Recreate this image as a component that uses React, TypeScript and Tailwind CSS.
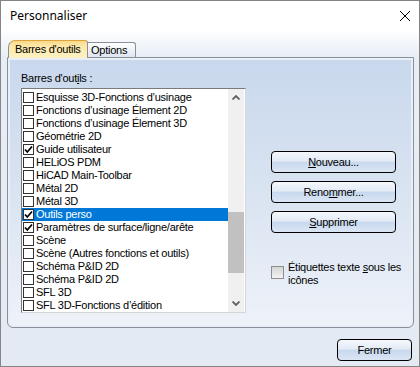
import React from 'react';

const items = [
    { label: 'Esquisse 3D-Fonctions d’usinage', checked: false },
    { label: 'Fonctions d’usinage Élement 2D', checked: false },
    { label: 'Fonctions d’usinage Élement 3D', checked: false },
    { label: 'Géométrie 2D', checked: false },
    { label: 'Guide utilisateur', checked: true },
    { label: 'HELiOS PDM', checked: false },
    { label: 'HiCAD Main-Toolbar', checked: false },
    { label: 'Métal 2D', checked: false },
    { label: 'Métal 3D', checked: false },
    { label: 'Outils perso', checked: true, selected: true },
    { label: 'Paramètres de surface/ligne/arête', checked: true },
    { label: 'Scène', checked: false },
    { label: 'Scène (Autres fonctions et outils)', checked: false },
    { label: 'Schéma P&ID 2D', checked: false },
    { label: 'Schéma P&ID 2D', checked: false },
    { label: 'SFL 3D', checked: false },
    { label: 'SFL 3D-Fonctions d’édition', checked: false },
];

function Row({ label, checked, selected }: { label: string; checked: boolean; selected?: boolean }) {
    return (
        <div className={`flex items-center h-[13px] shrink-0 ${selected ? 'bg-[#0078d7] text-white' : 'text-black'}`}>
            <span className="ml-[1px] mr-[2px] w-[11px] h-[11px] border border-[#333333] bg-white flex items-center justify-center">
                {checked && (
                    <svg width="9" height="9" viewBox="0 0 9 9">
                        <path d="M1 4.5 L3.3 7 L8 1.5" fill="none" stroke="#000" strokeWidth="1.8" />
                    </svg>
                )}
            </span>
            <span className="whitespace-nowrap leading-[13px]">{label}</span>
        </div>
    );
}

function WinButton({ children, className = '' }: { children: React.ReactNode; className?: string }) {
    return (
        <button
            className={`h-[22px] rounded-[4px] border border-black bg-[linear-gradient(to_bottom,#f5f8fc_0%,#e3ebf6_45%,#c8d8ee_52%,#dbe6f4_100%)] text-[11px] tracking-[-0.25px] text-black flex items-center justify-center ${className}`}
        >
            {children}
        </button>
    );
}

export default function App() {
    return (
        <div className="w-[420px] h-[367px] border border-[#858585] flex flex-col font-['Liberation_Sans',Arial,sans-serif] text-[11px] tracking-[-0.25px] select-none overflow-hidden">
            {/* Title bar */}
            <div className="h-[29px] bg-white flex items-center justify-between pl-[9px] pr-[9px] shrink-0">
                <span className="font-['Noto_Sans',sans-serif] text-[12px] tracking-normal text-black">Personnaliser</span>
                <svg width="10" height="10" viewBox="0 0 10 10">
                    <path d="M0 0 L10 10 M10 0 L0 10" stroke="#000" strokeWidth="1" />
                </svg>
            </div>

            {/* Body */}
            <div className="flex-1 flex flex-col bg-[linear-gradient(to_bottom,#ffffff_0px,#e8eef7_26px,#e3eaf4_100%)]">
                {/* Tabs */}
                <div className="flex items-end h-[17px] mt-[10px] pl-[7px] relative z-10">
                    <div className="w-[80px] h-[18px] -mb-[1px] rounded-tl-[7px] rounded-tr-[3px] border border-b-0 border-[#8a8f99] border-t-[#e0a23a] bg-[linear-gradient(to_bottom,#fbd98a_0%,#fde8a8_30%,#fff1c4_100%)] flex items-center pl-[6px] text-black">
                        Barres d'outils
                    </div>
                    <div className="w-[48px] h-[15px] rounded-tr-[3px] border border-l-0 border-b-0 border-[#8a8f99] bg-[linear-gradient(to_bottom,#ffffff,#dde5f0)] flex items-center pl-[3px] text-black">
                        Options
                    </div>
                </div>

                {/* Panel */}
                <div className="ml-[6px] w-[407px] h-[271px] border border-[#8a8f99] rounded-b-[6px] bg-[#e9eff7] p-[2px] shrink-0">
                    <div className="w-full h-full rounded-b-[4px] bg-[linear-gradient(to_bottom,#c9d8ed_0%,#dbe5f2_55%,#eef2f9_100%)] flex pl-[11px] pt-[12px]">
                        {/* List column */}
                        <div className="flex flex-col w-[225px]">
                            <div className="h-[13px] leading-[13px] text-black">
                                Barres d'out<span className="underline">i</span>ls :
                            </div>
                            <div className="mt-[3px] h-[225px] border border-[#7a7a7a] border-r-[#d6d6d6] border-b-[#d6d6d6] bg-white flex overflow-hidden">
                                <div className="flex-1 flex flex-col pt-[2px] overflow-hidden">
                                    {items.map((it, i) => (
                                        <Row key={i} label={it.label} checked={it.checked} selected={it.selected} />
                                    ))}
                                </div>
                                <div className="w-[16px] mr-[1px] bg-[#f0f0f0] flex flex-col">
                                    <div className="h-[17px] flex items-center justify-center">
                                        <svg width="8" height="5" viewBox="0 0 8 5">
                                            <path d="M0.5 4.5 L4 1 L7.5 4.5" fill="none" stroke="#606060" strokeWidth="1.8" />
                                        </svg>
                                    </div>
                                    <div className="h-[106px]" />
                                    <div className="h-[61px] bg-[#c1c1c1]" />
                                    <div className="flex-1" />
                                    <div className="h-[17px] flex items-center justify-center">
                                        <svg width="8" height="5" viewBox="0 0 8 5">
                                            <path d="M0.5 0.5 L4 4 L7.5 0.5" fill="none" stroke="#606060" strokeWidth="1.8" />
                                        </svg>
                                    </div>
                                </div>
                            </div>
                        </div>

                        {/* Actions */}
                        <div className="ml-[25px] mt-[79px] flex flex-col">
                            <WinButton className="w-[125px]">
                                <span className="underline">N</span>ouveau...
                            </WinButton>
                            <WinButton className="w-[125px] mt-[8px]">
                                Reno<span className="underline">m</span>mer...
                            </WinButton>
                            <WinButton className="w-[125px] mt-[8px]">
                                <span className="underline">S</span>upprimer
                            </WinButton>
                            <div className="flex items-start mt-[28px]">
                                <span className="mt-[5px] w-[13px] h-[13px] border border-[#8f8f8f] bg-[linear-gradient(to_bottom,#d5d5d5,#f3f3f3)] shrink-0" />
                                <span className="ml-[4px] w-[118px] leading-[13px] text-black">
                                    Étiquettes texte <span className="underline">s</span>ous les icônes
                                </span>
                            </div>
                        </div>
                    </div>
                </div>

                {/* Footer */}
                <div className="flex justify-end pr-[7px] mt-[11px]">
                    <WinButton className="w-[75px]">Fermer</WinButton>
                </div>
            </div>
        </div>
    );
}
